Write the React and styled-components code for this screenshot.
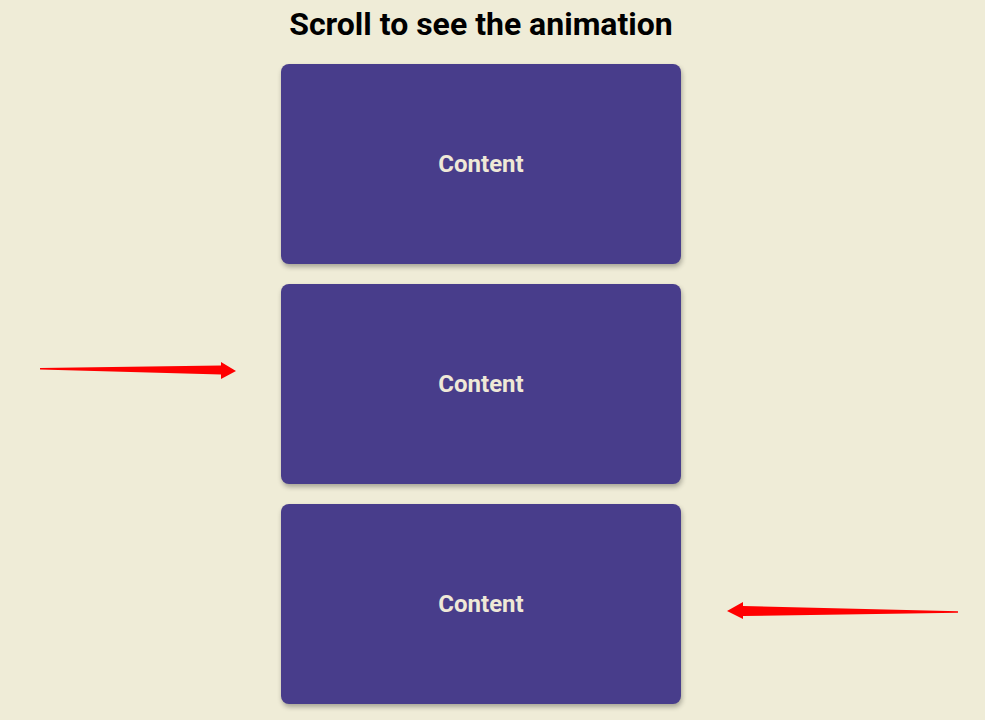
import React from 'react'
import styled, { createGlobalStyle } from 'styled-components'

const GlobalStyle = createGlobalStyle`
  html, body {
    margin: 0;
    padding: 0;
    background: #efecd7;
    font-family: Roboto, "Liberation Sans", sans-serif;
  }
`

const Page = styled.main`
  position: relative;
  width: 985px;
  height: 720px;
  overflow: hidden;
  padding-right: 23px;
  box-sizing: border-box;
  display: flex;
  flex-direction: column;
  align-items: center;
`

const Title = styled.h1`
  margin: 6px 0 20px;
  font-size: 32px;
  line-height: 37.5px;
  font-weight: 700;
  color: #000;
`

const CardList = styled.section`
  display: flex;
  flex-direction: column;
  gap: 20px;
`

const Card = styled.div`
  width: 400px;
  height: 200px;
  padding-top: 1px;
  box-sizing: border-box;
  border-radius: 8px;
  background: #483d8b;
  box-shadow: 1px 3px 5px rgba(0, 0, 0, 0.3);
  display: flex;
  align-items: center;
  justify-content: center;
  color: #efe9d7;
  font-size: 24px;
  font-weight: 700;
`

const Arrows = styled.svg`
  position: absolute;
  left: 0;
  top: 0;
  pointer-events: none;
`

export default function App() {
  return (
    <>
      <GlobalStyle />
      <Page>
        <Title>Scroll to see the animation</Title>
        <CardList>
          {[0, 1, 2].map((i) => (
            <Card key={i}>Content</Card>
          ))}
        </CardList>
        <Arrows width="985" height="720" viewBox="0 0 985 720">
          <polygon
            fill="#ff0000"
            points="40,368 221,365.5 221,362 236,371 221,379 221,374.5 40,369.5"
          />
          <polygon
            fill="#ff0000"
            points="958,611.3 743,606 743,602 727,611 743,619 743,616 958,612.7"
          />
        </Arrows>
      </Page>
    </>
  )
}
